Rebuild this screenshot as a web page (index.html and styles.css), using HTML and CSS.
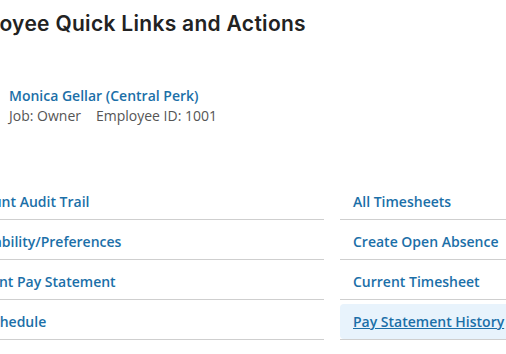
FILE: index.html
```html
<!DOCTYPE html>
<html>
	<head>
		<meta charset="utf-8" />
		<title>Employee Quick Links and Actions</title>
		<link rel="stylesheet" href="styles.css">
	</head>
	<body>
		<div class="page">
			<h1>Employee Quick Links and Actions</h1>
			<div class="profile">
				<div class="avatar">MG</div>
				<div class="profile-info">
					<a class="profile-name" href="#">Monica Gellar (Central Perk)</a>
					<div class="profile-meta">
						<span>Job: Owner</span>
						<span>Employee ID: 1001</span>
					</div>
				</div>
			</div>
			<ul class="links">
				<li><a href="#">Account Audit Trail</a></li>
				<li><a href="#">All Timesheets</a></li>
				<li><a href="#">Availability/Preferences</a></li>
				<li><a href="#">Create Open Absence</a></li>
				<li><a href="#">Current Pay Statement</a></li>
				<li><a href="#">Current Timesheet</a></li>
				<li><a href="#">My Schedule</a></li>
				<li class="hover"><a href="#">Pay Statement History</a></li>
			</ul>
		</div>
	</body>
</html>
```

FILE: styles.css
```css
body {
	margin: 0;
	font-family: "Open Sans", Arial, sans-serif;
	background-color: #fff;
	color: #555;
}

.page {
	margin-left: -52px;
}

h1 {
	margin: 10px 0 0;
	font-family: Inter, Lato, sans-serif;
	font-size: 21px;
	line-height: 28px;
	font-weight: 600;
	letter-spacing: 0.3px;
	color: #222;
	white-space: nowrap;
}

.profile {
	display: flex;
	align-items: center;
	gap: 13px;
	margin-top: 44px;
}

.avatar {
	width: 48px;
	height: 48px;
	border-radius: 50%;
	background-color: #dbe7f0;
	color: #1b6fa8;
	font-size: 14px;
	display: flex;
	align-items: center;
	justify-content: center;
}

.profile-info {
	font-size: 14px;
	line-height: 20px;
}

.profile-name {
	display: block;
	color: #1b6fa8;
	font-weight: 600;
	text-decoration: none;
}

.profile-meta {
	display: flex;
	gap: 15px;
	color: #555;
}

.links {
	list-style: none;
	margin: 50px 0 0;
	padding: 0;
	display: grid;
	grid-template-columns: 376px 376px;
	column-gap: 16px;
}

.links li {
	padding-top: 4px;
	border-bottom: 1px solid #cfcfcf;
}

.links a {
	display: block;
	padding: 8px 13px;
	font-size: 14px;
	line-height: 19px;
	font-weight: 600;
	color: #1b6fa8;
	text-decoration: none;
	border-radius: 4px;
	white-space: nowrap;
}

.links li.hover a {
	background-color: #e8f3fc;
	text-decoration: underline;
}
```
